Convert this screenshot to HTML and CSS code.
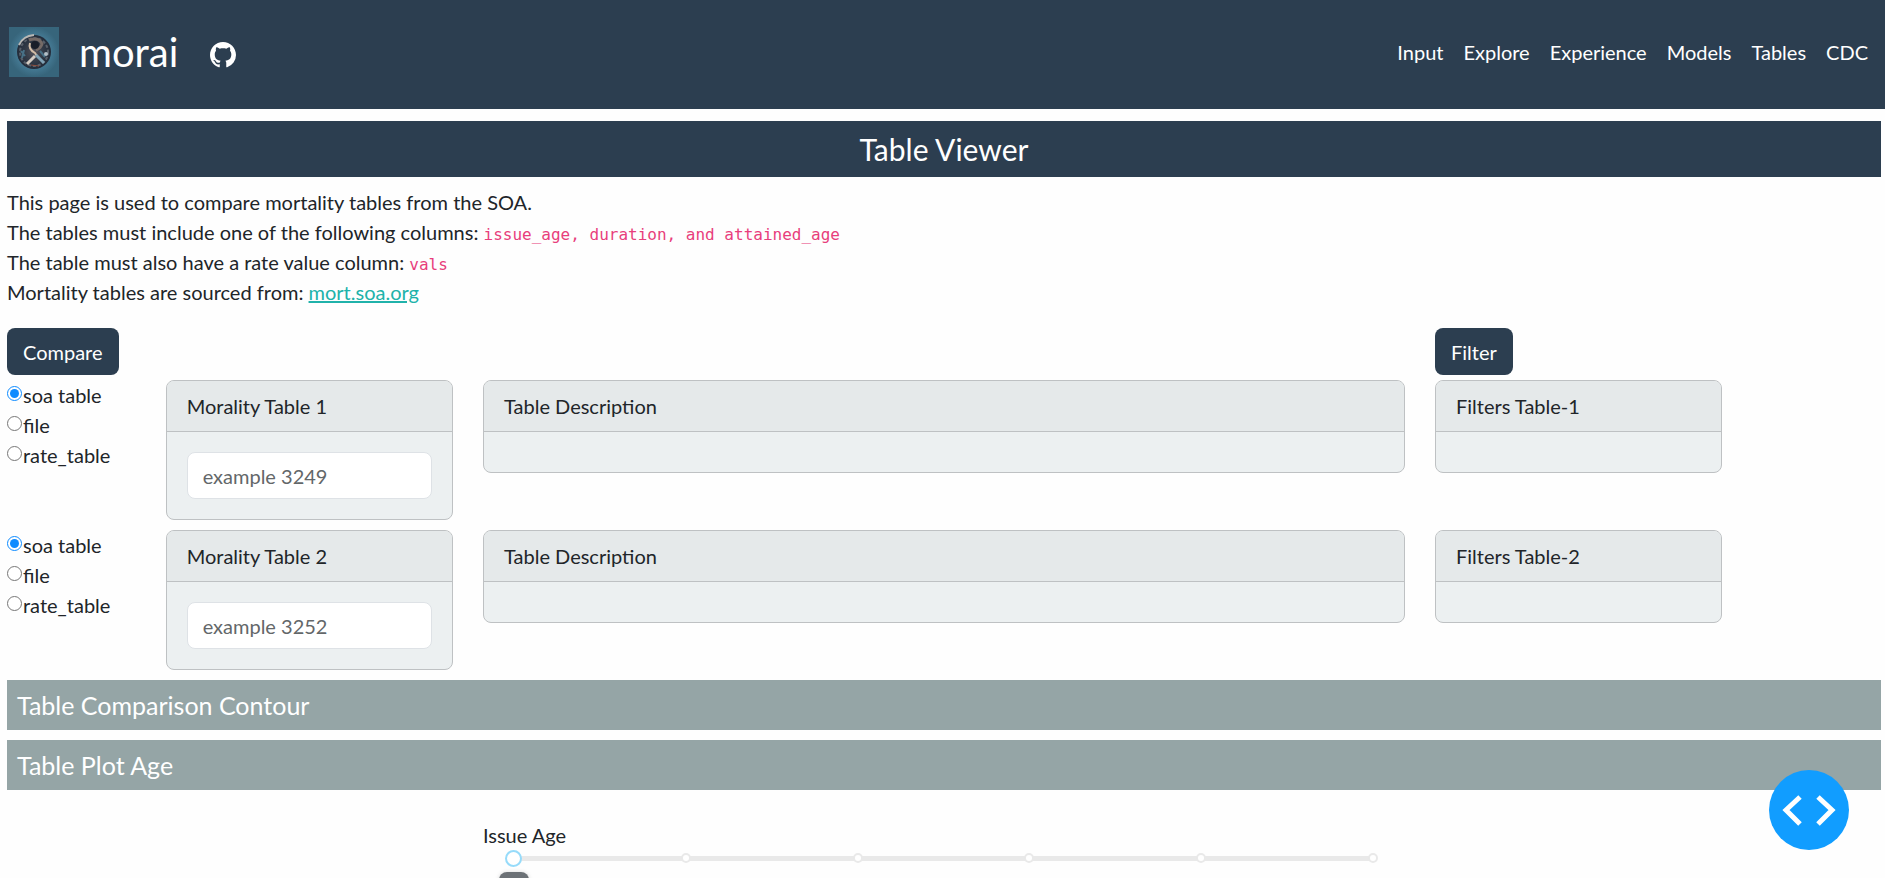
FILE: index.html
```html
<!DOCTYPE html>
<html lang="en">
<head>
<meta charset="utf-8">
<title>morai</title>
<link rel="stylesheet" href="styles.css">
</head>
<body>
<header class="navbar">
  <a class="brand" href="#">
    <svg class="logo" viewBox="0 0 50 50" aria-hidden="true">
      <defs>
        <radialGradient id="sea"><stop offset="0" stop-color="#5a8fac"/><stop offset="0.65" stop-color="#457a94"/><stop offset="1" stop-color="#37657b"/></radialGradient>
        <radialGradient id="disc"><stop offset="0" stop-color="#54525a"/><stop offset="0.6" stop-color="#303845"/><stop offset="1" stop-color="#232c3a"/></radialGradient>
      </defs>
      <rect width="50" height="50" fill="url(#sea)"/>
      <circle cx="25" cy="25" r="17" fill="url(#disc)"/>
      <circle cx="25" cy="25" r="14" fill="none" stroke="#59606a" stroke-width="2" stroke-dasharray="3 2"/>
      <path d="M10 18Q14 9 25 8" fill="none" stroke="#b9b8b5" stroke-width="2"/>
      <path d="M20 13Q30 10 33 17Q32 21 27 23" fill="none" stroke="#756a66" stroke-width="3"/>
      <circle cx="26" cy="18" r="4" fill="#191e29"/>
      <path d="M21 16Q19 22 26 26L28 29" fill="none" stroke="#d2bda7" stroke-width="2"/>
      <path d="M26 29L18 37" stroke="#d4cbc2" stroke-width="3"/>
      <path d="M27 28L35 36" stroke="#7fa2b5" stroke-width="3"/>
      <path d="M12 24l4 5M15 23l-2 8M31 24l5 6" stroke="#487086" stroke-width="2"/>
      <circle cx="37" cy="27" r="2" fill="#b3bfc7"/>
      <path d="M22 38l8 1" stroke="#8d4e3d" stroke-width="1"/>
    </svg>
    <span>morai</span>
  </a>
  <a class="github" href="#" aria-label="GitHub">
    <svg viewBox="0 0 16 16" fill="currentColor" aria-hidden="true"><path d="M8 0C3.58 0 0 3.58 0 8c0 3.54 2.29 6.53 5.47 7.59.4.07.55-.17.55-.38 0-.19-.01-.82-.01-1.49-2.01.37-2.53-.49-2.69-.94-.09-.23-.48-.94-.82-1.13-.28-.15-.68-.52-.01-.53.63-.01 1.08.58 1.23.82.72 1.21 1.87.87 2.33.66.07-.52.28-.87.51-1.07-1.78-.2-3.64-.89-3.64-3.95 0-.87.31-1.59.82-2.15-.08-.2-.36-1.02.08-2.12 0 0 .67-.21 2.2.82.64-.18 1.32-.27 2-.27s1.36.09 2 .27c1.53-1.04 2.2-.82 2.2-.82.44 1.1.16 1.92.08 2.12.51.56.82 1.27.82 2.15 0 3.07-1.87 3.75-3.65 3.95.29.25.54.73.54 1.48 0 1.07-.01 1.93-.01 2.2 0 .21.15.46.55.38A8.01 8.01 0 0 0 16 8c0-4.42-3.58-8-8-8z"/></svg>
  </a>
  <nav class="links">
    <a href="#">Input</a><a href="#">Explore</a><a href="#">Experience</a><a href="#">Models</a><a href="#">Tables</a><a href="#">CDC</a>
  </nav>
</header>
<main class="page">
  <h1 class="title">Table Viewer</h1>
  <p class="intro">This page is used to compare mortality tables from the SOA.<br>
    The tables must include one of the following columns: <code>issue_age, duration, and attained_age</code><br>
    The table must also have a rate value column: <code>vals</code><br>
    Mortality tables are sourced from: <a href="#">mort.soa.org</a></p>

  <div class="row actions">
    <div class="wide"><button class="btn" type="button">Compare</button></div>
    <div class="side"><button class="btn" type="button">Filter</button></div>
  </div>

  <div class="row tables">
    <div class="radios" role="radiogroup" aria-label="Table 1 source">
      <label><input type="radio" name="source1" checked>soa table</label>
      <label><input type="radio" name="source1">file</label>
      <label><input type="radio" name="source1">rate_table</label>
    </div>
    <section class="card side">
      <label class="card-head" for="table1">Morality Table 1</label>
      <div class="card-body"><input class="field" id="table1" type="text" placeholder="example 3249"></div>
    </section>
    <section class="card middle"><div class="card-head">Table Description</div><div class="card-body"></div></section>
    <section class="card side"><div class="card-head">Filters Table-1</div><div class="card-body"></div></section>
  </div>

  <div class="row tables">
    <div class="radios" role="radiogroup" aria-label="Table 2 source">
      <label><input type="radio" name="source2" checked>soa table</label>
      <label><input type="radio" name="source2">file</label>
      <label><input type="radio" name="source2">rate_table</label>
    </div>
    <section class="card side">
      <label class="card-head" for="table2">Morality Table 2</label>
      <div class="card-body"><input class="field" id="table2" type="text" placeholder="example 3252"></div>
    </section>
    <section class="card middle"><div class="card-head">Table Description</div><div class="card-body"></div></section>
    <section class="card side"><div class="card-head">Filters Table-2</div><div class="card-body"></div></section>
  </div>

  <h2 class="section">Table Comparison Contour</h2>
  <h2 class="section">Table Plot Age</h2>

  <div class="row plot">
    <div class="slider-block">
      <label for="age">Issue Age</label>
      <div class="slider">
        <div class="dots"><i></i><i></i><i></i><i></i><i></i><i></i></div>
        <input class="range" id="age" type="range" min="0" max="5" value="0">
        <div class="tip"></div>
      </div>
    </div>
  </div>
</main>
<button class="debug" type="button" aria-label="Developer tools">
  <svg viewBox="0 0 80 80" fill="none" stroke="#fff" stroke-width="5" aria-hidden="true"><path d="M31 27L17 40L31 54M49 27L63 40L49 54"/></svg>
</button>
</body>
</html>
```
FILE: styles.css
```css
* { box-sizing: border-box; }
html { overflow: hidden; }
body {
  margin: 0;
  background: #fefefe;
  color: #212529;
  font: 20px/30px Lato, sans-serif;
  height: 100vh;
}
.navbar {
  display: flex;
  align-items: center;
  height: 109px;
  padding: 0 17px 6px 9px;
  background: #2c3e50;
}
.navbar a { color: #fff; text-decoration: none; }
.brand { display: flex; align-items: center; gap: 20px; font-size: 40px; line-height: 60px; }
.logo { width: 50px; height: 50px; }
.github { display: flex; margin: 6px 0 0 32px; }
.github svg { width: 26px; height: 26px; }
.links { display: flex; gap: 20px; margin-left: auto; }
.page { padding: 12px 4px 0 7px; }
.title, .section { margin: 0 0 10px; padding: 10px; color: #fff; font-weight: 400; }
.title { background: #2c3e50; text-align: center; font-size: 30px; line-height: 36px; }
.section { background: #95a5a6; font-size: 25px; line-height: 30px; }
.intro { margin: 0 0 21px; }
.intro code { color: #e83e7c; font: 16px/20px "DejaVu Sans Mono", monospace; }
.intro a { color: #20b2aa; }
.row { display: grid; grid-template-columns: repeat(12, 1fr); column-gap: 30px; align-items: start; }
.actions { margin-bottom: 5px; }
.wide { grid-column: span 9; }
.side { grid-column: span 2; }
.middle { grid-column: span 6; }
.btn {
  display: block;
  height: 47px;
  padding: 0 16px;
  border: 0;
  border-radius: 8px;
  background: #2c3e50;
  color: #fff;
  font: inherit;
}
.tables { margin-bottom: 10px; }
.radios label { display: flex; align-items: flex-start; height: 30px; white-space: nowrap; }
.radios input { width: 15px; height: 15px; margin: 6px 1px 0 0; accent-color: #0d8bff; }
.card { border: 1px solid #bec1c3; border-radius: 8px; background: #ecf0f1; overflow: hidden; }
.card-head { display: block; padding: 10px 20px; border-bottom: 1px solid #bec1c3; background: #e5e9ea; }
.card-body { padding: 20px; }
.field {
  display: block;
  width: 100%;
  height: 47px;
  padding: 0 15px;
  border: 1px solid #dee2e6;
  border-radius: 8px;
  background: #fff;
  color: #212529;
  font: inherit;
}
.field::placeholder { color: #636769; opacity: 1; }
.plot { padding-top: 20px; }
.slider-block { grid-column: 4 / span 6; }
.slider-block label { display: block; }
.slider { position: relative; height: 17px; margin: 0 23px 0 22px; }
.slider::before { content: ""; position: absolute; inset: 6px 8px auto; height: 5px; background: #e9e9e9; }
.dots { position: absolute; inset: 3px 4px auto; display: flex; justify-content: space-between; }
.dots i { width: 10px; height: 10px; border: 2px solid #e9e9e9; border-radius: 50%; background: #fff; }
.range { position: absolute; inset: 0; width: 100%; height: 17px; margin: 0; appearance: none; background: none; }
.range::-webkit-slider-thumb {
  appearance: none;
  width: 17px;
  height: 17px;
  border: 2px solid #96dbfa;
  border-radius: 50%;
  background: #fff;
}
.tip {
  position: absolute;
  top: 22px;
  left: -6px;
  width: 30px;
  height: 30px;
  border-radius: 8px;
  background: #6c7176;
  box-shadow: 0 0 4px #d9d9d9;
}
.debug {
  position: fixed;
  right: 36px;
  bottom: 28px;
  width: 80px;
  height: 80px;
  padding: 0;
  border: 0;
  border-radius: 50%;
  background: #119dff;
}
.debug svg { display: block; width: 80px; height: 80px; }
```
